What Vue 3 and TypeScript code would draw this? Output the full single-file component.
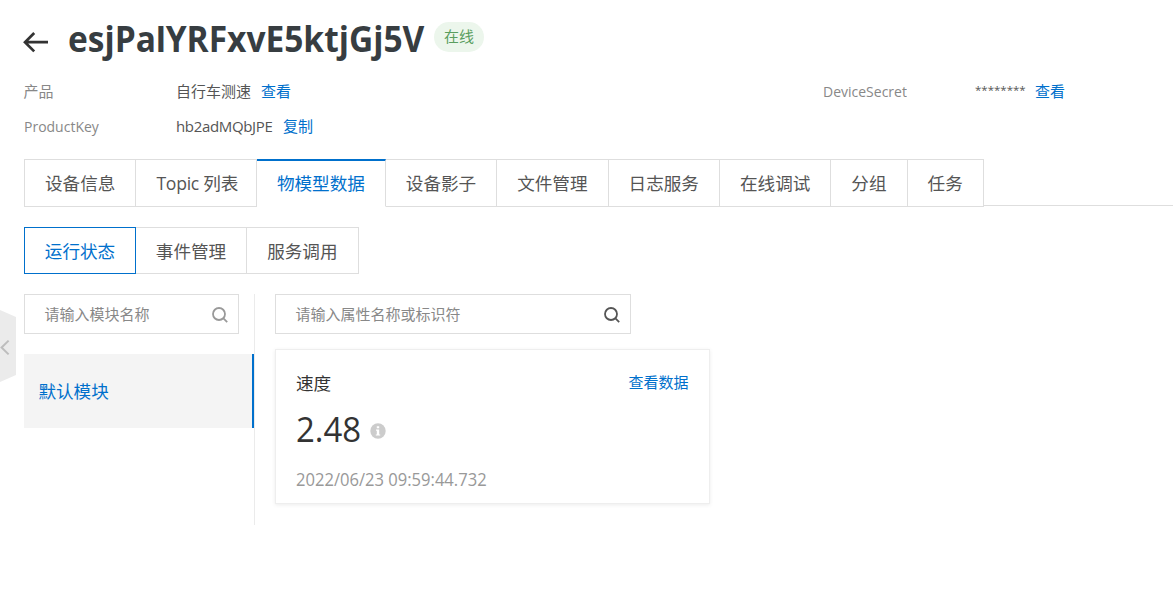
<script setup lang="ts">
interface Tab {
  label: string
  latin?: boolean
}

const tabs: Tab[] = [
  { label: '设备信息' },
  { label: 'Topic 列表', latin: true },
  { label: '物模型数据' },
  { label: '设备影子' },
  { label: '文件管理' },
  { label: '日志服务' },
  { label: '在线调试' },
  { label: '分组' },
  { label: '任务' },
]
const activeTab = '物模型数据'

const views: string[] = ['运行状态', '事件管理', '服务调用']
const activeView = '运行状态'
</script>

<template>
  <div class="page">
    <div class="handle">
      <svg width="16" height="72" viewBox="0 0 16 72">
        <path d="M0 0L16 7V65L0 72Z" fill="#ebebeb" />
        <path d="M8.6 30.6L1.6 37.5L8.6 44.4" fill="none" stroke="#bdbdbd" stroke-width="2" />
      </svg>
    </div>

    <header class="header">
      <svg class="back" width="26" height="22" viewBox="0 0 26 22">
        <path d="M11.2 2L2 11.2L11.2 20.4M1.6 11.2H25" fill="none" stroke="#333" stroke-width="2.7" />
      </svg>
      <h1 class="title">esjPa<span class="plain-i">I</span>YRFxvE5ktjGj5V</h1>
      <span class="status">在线</span>
    </header>

    <div class="info">
      <div class="row">
        <span class="label">产品</span>
        <span class="value">自行车测速</span>
        <a class="link">查看</a>
      </div>
      <div class="row">
        <span class="label secret-label">DeviceSecret</span>
        <span class="value stars">********</span>
        <a class="link">查看</a>
      </div>
      <div class="row">
        <span class="label key-label">ProductKey</span>
        <span class="value key">hb2adMQbJPE</span>
        <a class="link">复制</a>
      </div>
    </div>

    <nav class="tabs">
      <div
        v-for="tab in tabs"
        :key="tab.label"
        class="tab"
        :class="{ active: tab.label === activeTab, latin: tab.latin }"
      >{{ tab.label }}</div>
      <div class="rest"></div>
    </nav>

    <div class="views">
      <div v-for="v in views" :key="v" class="view" :class="{ active: v === activeView }">{{ v }}</div>
    </div>

    <main class="content">
      <aside class="side">
        <div class="search">
          <span>请输入模块名称</span>
          <svg class="glass pale" width="16" height="16" viewBox="0 0 16 16">
            <circle cx="7" cy="7" r="6" />
            <path d="M11.2 11.2L15.2 15.2" />
          </svg>
        </div>
        <div class="module">默认模块</div>
      </aside>
      <section class="panel">
        <div class="search wide">
          <span>请输入属性名称或标识符</span>
          <svg class="glass" width="16" height="16" viewBox="0 0 16 16">
            <circle cx="7" cy="7" r="6" />
            <path d="M11.2 11.2L15.2 15.2" />
          </svg>
        </div>
        <article class="card">
          <div class="card-head">
            <span class="name">速度</span>
            <a class="link">查看数据</a>
          </div>
          <div class="reading">
            <span class="number">2.48</span>
            <svg class="hint" width="16" height="16" viewBox="0 0 16 16">
              <circle cx="8" cy="8" r="7.7" fill="#ccc" />
              <path d="M6.8 3.2h2.4v2.1H6.8zM6 6.6h3.2v4.8h1v1.2H5.8v-1.2h1V7.8H6z" fill="#fff" />
            </svg>
          </div>
          <div class="time">2022/06/23 09:59:44.732</div>
        </article>
      </section>
    </main>
  </div>
</template>

<style>
body {
  margin: 0;
  background: #fff;
}
</style>

<style scoped>
.page {
  position: relative;
  box-sizing: border-box;
  width: 1173px;
  height: 602px;
  padding: 18px 0 0 24px;
  overflow: hidden;
  color: #555;
  background: #fff;
  font-family: "Open Sans", "Noto Sans CJK SC", sans-serif;
  font-size: 15px;
  font-weight: 400;
  white-space: nowrap;
}
.handle {
  position: absolute;
  left: 0;
  top: 310px;
}
svg {
  display: block;
  flex: none;
}
.header {
  display: flex;
  height: 42px;
}
.back {
  margin: 13px 19px 0 -1px;
}
.title {
  width: 354px;
  margin: 0;
  color: #373d41;
  font-size: 35px;
  font-weight: 700;
  line-height: 42px;
  transform: scaleX(0.957);
  transform-origin: 0 50%;
}
.plain-i {
  font-family: "Liberation Sans", sans-serif;
  font-size: 36.5px;
  line-height: 1;
}
.status {
  width: 50px;
  height: 30px;
  margin: 4px 0 0 12px;
  border-radius: 15px;
  color: #5a9e5f;
  background: #ecf6ec;
  line-height: 29px;
  text-align: center;
}
.info {
  display: grid;
  grid-template-columns: 799px 1fr;
  row-gap: 5px;
  padding-top: 16px;
}
.row {
  display: flex;
  height: 30px;
  margin-left: -0.5px;
  line-height: 30px;
}
.label {
  width: 152.5px;
  color: #888;
}
.secret-label,
.key-label {
  transform: scaleX(0.933);
  transform-origin: 0 50%;
}
.key {
  width: 97px;
  letter-spacing: -0.34px;
}
.stars {
  width: 50px;
  font-size: 11.5px;
  line-height: 27px;
}
.link {
  margin-left: 10px;
  color: #0070cc;
}
.tabs {
  display: flex;
  height: 48px;
  margin-top: 18px;
  font-size: 17.6px;
}
.tab {
  box-sizing: border-box;
  padding: 0 20px;
  border: 1px solid #dedede;
  border-left: 0;
  line-height: 47px;
}
.tab:first-child {
  border-left: 1px solid #dedede;
}
.tab.latin {
  width: 120.5px;
  letter-spacing: -0.25px;
}
.tab.active {
  width: 128.9px;
  border-top: 2px solid #0070cc;
  border-bottom-color: #fff;
  color: #0070cc;
  line-height: 45px;
}
.tab:nth-last-child(2) {
  width: 76.9px;
}
.rest {
  flex: 1;
  height: 46px;
  border-bottom: 1px solid #dedede;
}
.views {
  display: flex;
  margin-top: 20px;
  font-size: 17.6px;
}
.view {
  box-sizing: border-box;
  height: 47px;
  padding: 0 20.2px 0 19.8px;
  border: 1px solid #dedede;
  border-left: 0;
  line-height: 46px;
}
.view.active {
  width: 112px;
  border: 1px solid #0070cc;
  color: #0070cc;
}
.content {
  display: flex;
  margin-top: 20px;
}
.side {
  box-sizing: border-box;
  width: 231px;
  height: 231px;
  border-right: 1px solid #ebebeb;
}
.search {
  box-sizing: border-box;
  display: flex;
  justify-content: space-between;
  width: 215px;
  height: 40px;
  padding: 0 9.7px 0 19.6px;
  border: 1px solid #dedede;
  color: #888;
  line-height: 39px;
}
.search.wide {
  width: 356px;
}
.glass {
  margin-top: 12px;
  fill: none;
  stroke: #555;
  stroke-width: 1.8;
}
.glass.pale {
  stroke: #999;
}
.module {
  box-sizing: border-box;
  height: 74px;
  margin-top: 20px;
  padding-left: 14.4px;
  border-right: 2px solid #0070cc;
  color: #0070cc;
  background: #f4f4f4;
  font-size: 17.6px;
  line-height: 75px;
}
.panel {
  margin-left: 20px;
}
.card {
  box-sizing: border-box;
  width: 435px;
  height: 155px;
  margin-top: 15px;
  padding: 19px 20.5px 0 19.9px;
  border: 1px solid #eee;
  box-shadow: 0 1px 4px rgba(0, 0, 0, 0.08);
}
.card-head {
  display: flex;
  justify-content: space-between;
  height: 28px;
  line-height: 26px;
}
.name {
  color: #333;
  font-size: 17.6px;
  line-height: 28px;
}
.reading {
  display: flex;
  height: 56px;
  margin-top: 3px;
}
.number {
  width: 65px;
  margin-right: 9px;
  color: #333;
  font-size: 35px;
  line-height: 58px;
  transform: scaleX(0.94);
  transform-origin: 0 50%;
}
.hint {
  margin-top: 23px;
}
.time {
  margin-top: 11px;
  color: #999;
  font-size: 17.6px;
  line-height: 24px;
  transform: scaleX(0.942);
  transform-origin: 0 50%;
}
</style>
